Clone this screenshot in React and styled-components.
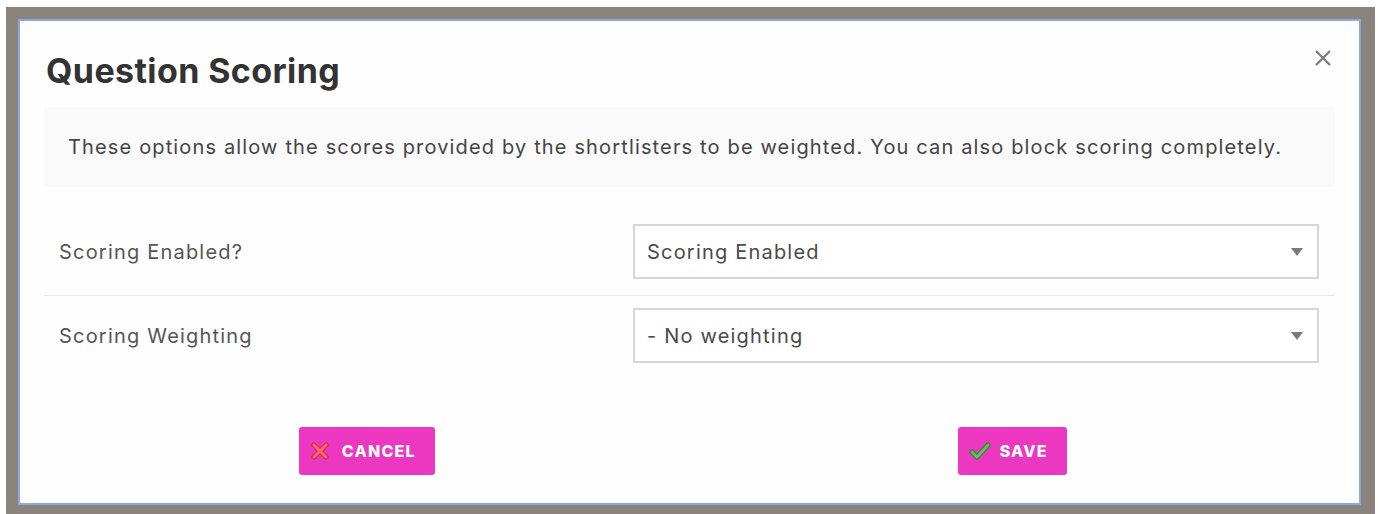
import React from 'react';
import styled, { createGlobalStyle } from 'styled-components';

const colors = {
  backdrop: '#8b847c',
  frameBlue: '#86aae6',
  text: '#3d3d3d',
  muted: '#555',
  line: '#e8e8e8',
  field: '#d6d6d6',
  pink: '#ec38c0',
};

const GlobalStyle = createGlobalStyle`
  html, body {
    margin: 0;
    background: #fff;
  }
  body {
    font-family: 'Inter', 'Noto Sans', sans-serif;
    color: ${colors.text};
  }
`;

const Backdrop = styled.div`
  margin: 7px 3px 0 6px;
  padding: 12px 14px 9px 12px;
  background: ${colors.backdrop};
`;

const Dialog = styled.section`
  position: relative;
  height: 486px;
  box-sizing: border-box;
  border: 2px solid ${colors.frameBlue};
  background: #fefefe;
  padding: 0 24px;
  display: flex;
  flex-direction: column;
`;

const Header = styled.header`
  padding: 28px 0 0 2px;
  height: 86px;
  box-sizing: border-box;
`;

const Title = styled.h2`
  margin: 0;
  font-size: 34px;
  line-height: 44px;
  font-weight: 700;
  color: #333;
  letter-spacing: 0.4px;
`;

const CloseButton = styled.button`
  position: absolute;
  top: 25px;
  right: 24px;
  width: 24px;
  height: 24px;
  padding: 0;
  border: 0;
  background: none;
  color: #7a7a7a;
  cursor: pointer;
`;

const Intro = styled.p`
  margin: 0;
  height: 80px;
  display: flex;
  align-items: center;
  padding: 0 24px;
  background: #fafafa;
  font-size: 20px;
  color: #444;
  letter-spacing: 1.15px;
`;

const Fields = styled.div`
  margin-top: 25px;
`;

const FieldRow = styled.div`
  display: grid;
  grid-template-columns: 589px 1fr;
  align-items: center;
  padding: 12px 16px 16px 0;
  border-bottom: 1px solid ${(p) => (p.last ? 'transparent' : colors.line)};
`;

const Label = styled.label`
  padding-left: 15px;
  font-size: 20px;
  color: ${colors.muted};
  letter-spacing: 1.2px;
`;

const Select = styled.div`
  height: 55px;
  box-sizing: border-box;
  border: 2px solid ${colors.field};
  display: flex;
  align-items: center;
  justify-content: space-between;
  padding: 0 14px 0 12px;
  font-size: 20px;
  color: #4a4a4a;
  letter-spacing: 1.2px;
  background: #fff;
`;

const Caret = styled.span`
  width: 0;
  height: 0;
  border-left: 6px solid transparent;
  border-right: 6px solid transparent;
  border-top: 8px solid #7a7a7a;
`;

const Footer = styled.footer`
  display: grid;
  grid-template-columns: 1fr 1fr;
  padding-top: 47px;
`;

const Cell = styled.div`
  display: flex;
  justify-content: center;
`;

const ActionButton = styled.button`
  height: 48px;
  display: flex;
  align-items: center;
  gap: ${(p) => p.gap}px;
  padding: 0 19px 0 ${(p) => p.lead}px;
  border: 0;
  border-radius: 3px;
  background: ${colors.pink};
  color: #fff;
  font-family: 'Inter', sans-serif;
  font-size: 16px;
  font-weight: 800;
  letter-spacing: 1.2px;
  cursor: pointer;
`;

const CrossIcon = () => (
  <svg width="18" height="18" viewBox="0 0 18 18">
    <path d="M3 3 L15 15 M15 3 L3 15" stroke="#d9283f" strokeWidth="5" strokeLinecap="round" />
    <path d="M3 3 L15 15 M15 3 L3 15" stroke="#fb6a6e" strokeWidth="3" strokeLinecap="round" />
  </svg>
);

const CheckIcon = () => (
  <svg width="22" height="18" viewBox="0 0 22 18">
    <path d="M3 10 L8 15 L19 3" fill="none" stroke="#2f7d34" strokeWidth="5" strokeLinecap="round" strokeLinejoin="round" />
    <path d="M3 10 L8 15 L19 3" fill="none" stroke="#5cc05f" strokeWidth="3" strokeLinecap="round" strokeLinejoin="round" />
  </svg>
);

const fields = [
  { label: 'Scoring Enabled?', value: 'Scoring Enabled' },
  { label: 'Scoring Weighting', value: '- No weighting' },
];

const App = () => (
  <>
    <GlobalStyle />
    <Backdrop>
      <Dialog role="dialog">
        <Header>
          <Title>Question Scoring</Title>
        </Header>
        <CloseButton aria-label="Close">
          <svg width="24" height="24" viewBox="0 0 24 24">
            <path d="M5 5 L19 19 M19 5 L5 19" stroke="currentColor" strokeWidth="2.2" />
          </svg>
        </CloseButton>
        <Intro>
          These options allow the scores provided by the shortlisters to be weighted. You can also block scoring completely.
        </Intro>
        <Fields>
          {fields.map((f, i) => (
            <FieldRow key={f.label} last={i === fields.length - 1}>
              <Label>{f.label}</Label>
              <Select>
                {f.value}
                <Caret />
              </Select>
            </FieldRow>
          ))}
        </Fields>
        <Footer>
          <Cell>
            <ActionButton lead={12} gap={13}>
              <CrossIcon />
              CANCEL
            </ActionButton>
          </Cell>
          <Cell>
            <ActionButton lead={11} gap={9}>
              <CheckIcon />
              SAVE
            </ActionButton>
          </Cell>
        </Footer>
      </Dialog>
    </Backdrop>
  </>
);

export default App;
